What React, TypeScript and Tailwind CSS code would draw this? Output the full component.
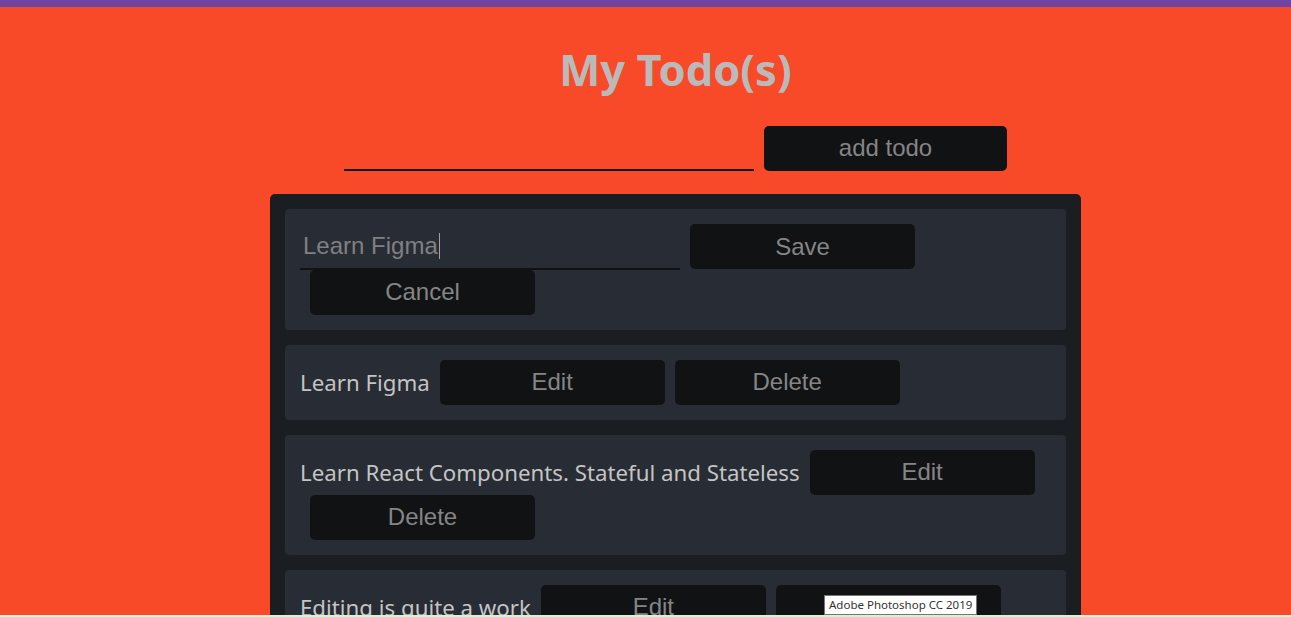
import React from "react";

type Todo = { id: number; text: string; editing?: boolean };

const TODOS: Todo[] = [
  { id: 1, text: "Learn Figma", editing: true },
  { id: 2, text: "Learn Figma" },
  { id: 3, text: "Learn React Components. Stateful and Stateless" },
  { id: 4, text: "Editing is quite a work" },
];

function Btn({ children }: { children: React.ReactNode }) {
  return (
    <button className="ml-[10px] h-[45px] w-[225px] shrink-0 rounded-[5px] bg-[#111214] text-[24px] leading-none text-[#858585] [font-family:'Liberation_Sans',Arial,sans-serif]">
      {children}
    </button>
  );
}

function TodoCard({ todo }: { todo: Todo }) {
  if (todo.editing) {
    return (
      <div className="flex flex-wrap items-center rounded-[4px] bg-[#282c34] p-[15px]">
        <div className="flex h-[46px] w-[380px] items-center border-b-2 border-[#111214] pl-[3px] text-[24px] text-[#808080] [font-family:'Liberation_Sans',Arial,sans-serif]">
          {todo.text}
          <span className="ml-px inline-block h-[26px] w-px bg-[#a0a0a0]" />
        </div>
        <Btn>Save</Btn>
        <Btn>Cancel</Btn>
      </div>
    );
  }
  return (
    <div className="flex flex-wrap items-center rounded-[4px] bg-[#282c34] p-[15px]">
      <span className="text-[22.25px] leading-[45px] text-[#c4c4c4] [font-family:'Noto_Sans',sans-serif]">
        {todo.text}
      </span>
      <Btn>Edit</Btn>
      <Btn>Delete</Btn>
    </div>
  );
}

export default function App() {
  return (
    <div className="min-h-screen border-t-[7px] border-[#7044a0] bg-[#f84a29] pb-10">
      <div className="ml-[60px] flex flex-col items-center">
        <h1 className="mt-[41px] text-[43.5px] font-bold leading-none text-[#bababa] [font-family:'Noto_Sans',sans-serif]">
          My Todo(s)
        </h1>

        <div className="mt-[34px] flex items-center gap-[10px]">
          <div className="h-[45px] w-[410px] border-b-2 border-[#111214]" />
          <button className="h-[45px] w-[243px] rounded-[5px] bg-[#111214] text-[24px] leading-none text-[#858585] [font-family:'Liberation_Sans',Arial,sans-serif]">
            add todo
          </button>
        </div>

        <div className="mt-[23px] flex w-[811px] flex-col gap-[15px] rounded-[5px] bg-[#1a1d21] p-[15px]">
          {TODOS.map((todo) => (
            <TodoCard key={todo.id} todo={todo} />
          ))}
        </div>
      </div>

      {/* hover tooltip */}
      <div className="fixed left-[824px] top-[595px] border border-[#767676] bg-white px-[4px] text-[11.5px] leading-[18px] text-[#333] [font-family:'Noto_Sans',sans-serif]">
        Adobe Photoshop CC 2019
      </div>
      {/* taskbar edge */}
      <div className="fixed bottom-0 left-0 right-0 h-[2px] bg-[#e4ecd8]" />
    </div>
  );
}
